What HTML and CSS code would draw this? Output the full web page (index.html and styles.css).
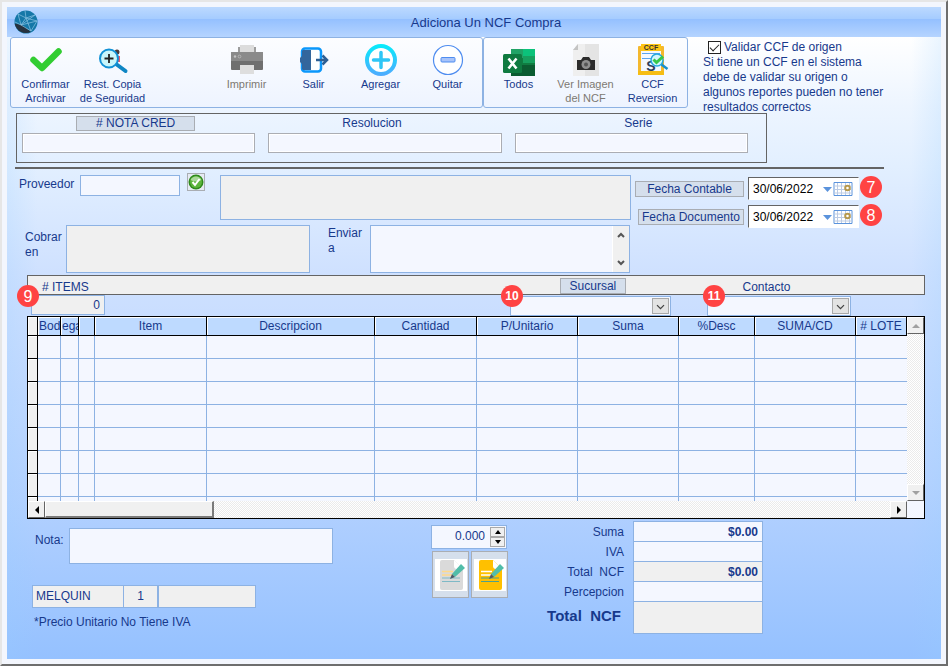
FILE: index.html
```
<!DOCTYPE html>
<html lang="es">
<head>
  <meta charset="UTF-8">
  <title>Adiciona Un NCF Compra</title>
  <link rel="stylesheet" href="styles.css">
</head>
<body>
<div class="window">
<form class="content">

  <header class="titlebar">
    <svg class="logo" viewBox="0 0 24 24">
      <circle cx="12" cy="12" r="11.5" fill="#1578a8"/>
      <path d="M.6 13.5 8 15l9 6.8A11.500 11.500 0 0 1 .6 13.500z" fill="#26323f"/>
      <path d="M4 4l8 4 9-3M4 4l3 11 5-7 5 13M7 15l16-4M12 8l11 3-6 10M7 15l10 6M12 8L11 .5M7 15l14-10M7 15l-6-3" fill="none" stroke="#8cc4e4" stroke-width=".7"/>
    </svg>
    <h1>Adiciona Un NCF Compra</h1>
  </header>

  <div class="top">
    <div class="toolbar">
      <button type="button" class="tool">
        <svg viewBox="0 0 32 32"><path d="M3.500 16 12 24 28.500 7.500" fill="none" stroke="#32cd32" stroke-width="6.500" stroke-linecap="round" stroke-linejoin="round"/></svg>
        Confirmar Archivar
      </button>
      <button type="button" class="tool">
        <svg viewBox="0 0 32 32">
          <circle cx="20" cy="8" r="2.500" fill="#4a3a3a"/><path d="M19 12h4v6h-4z" fill="#f0566a"/>
          <path d="M19 20l9.500 7" stroke="#0f86c4" stroke-width="4" stroke-linecap="round"/>
          <circle cx="12" cy="14.500" r="9" fill="#c9f6fb" stroke="#1191d6" stroke-width="2"/>
          <path d="M12 10v9M7.500 14.500h9" stroke="#222" stroke-width="1.800"/>
        </svg>
        Rest. Copia de Seguridad
      </button>
      <span class="tool"></span>
      <button type="button" class="tool" disabled>
        <svg viewBox="0 0 32 32">
          <path d="M7 3h18v6H7z" fill="#9c9c9c"/><path d="M9 1h14v8H9z" fill="#dcdcdc"/>
          <rect y="8" width="32" height="18" rx="1" fill="#6f6f6f"/><path d="M0 9q0-1 1-1h30q1 0 1 1v8H0z" fill="#8a8a8a"/>
          <circle cx="4" cy="12.500" r="1.200" fill="#c4c4c4"/><circle cx="8.500" cy="12.500" r="1.400" fill="none" stroke="#b5b5b5"/>
          <path d="M9 21h14v9H9z" fill="#dedede"/>
        </svg>
        Imprimir
      </button>
      <button type="button" class="tool">
        <svg viewBox="0 0 32 32">
          <rect x="4" y="4.500" width="19" height="23" rx="3" fill="#fff" stroke="#0a97fb" stroke-width="2.500"/>
          <path d="M5 6h8v20H5l-1-1v-5l-2-2v-4l2-2V7z" fill="#33669c"/>
          <path d="M18 16h11M24.500 11.500 29 16l-4.500 4.500" fill="none" stroke="#2d5f94" stroke-width="2.500"/>
        </svg>
        Salir
      </button>
      <button type="button" class="tool">
        <svg viewBox="0 0 32 32">
          <defs><linearGradient id="cyan" gradientUnits="userSpaceOnUse" x1="0" y1="0" x2="0" y2="32"><stop offset="0" stop-color="#06edfb"/><stop offset="1" stop-color="#4fa9ff"/></linearGradient></defs>
          <circle cx="16" cy="16" r="14" fill="#fff" stroke="url(#cyan)" stroke-width="4"/>
          <path d="M16 8.500v15M8.500 16h15" stroke="#2fc6f6" stroke-width="3.500" stroke-linecap="round"/>
        </svg>
        Agregar
      </button>
      <button type="button" class="tool">
        <svg viewBox="0 0 32 32">
          <circle cx="16" cy="16" r="14.500" fill="#fff" stroke="#4f8df0" stroke-width="1.200"/>
          <rect x="9" y="13.500" width="14" height="4.500" rx="1" fill="#a8c4fa" stroke="#4f8df0"/>
        </svg>
        Quitar
      </button>
    </div>

    <div class="toolbar">
      <button type="button" class="tool">
        <svg viewBox="0 0 32 32">
          <path d="M8 5h12v9H8z" fill="#21a366"/><path d="M20 5h12v9H20z" fill="#0cc27a"/>
          <path d="M8 14h24v8H8z" fill="#107c41"/><path d="M20 12h12v7H20z" fill="#17a05f"/><path d="M8 21h24v12H8z" fill="#0b5c31"/>
          <rect y="10" width="19" height="19" rx="1.500" fill="#0f7a40"/>
          <path d="M5.500 14.500l8 10M13.500 14.500l-8 10" stroke="#fff" stroke-width="2.600"/>
        </svg>
        Todos
      </button>
      <button type="button" class="tool" disabled>
        <svg viewBox="0 0 32 32">
          <path d="M3 6l5-6h21v32H3z" fill="#e4e4e4"/><path d="M3 6l5-6h7v32H3z" fill="#efefef"/><path d="M3 6l5-6v6z" fill="#c4c4c4"/>
          <path d="M7 16h4l2-3h6l2 3h4v10H7z" fill="#2c2c2c"/>
          <circle cx="16" cy="20.500" r="4.500" fill="#8f8f8f"/><circle cx="16" cy="20.500" r="2" fill="#555"/>
        </svg>
        Ver Imagen del NCF
      </button>
      <button type="button" class="tool">
        <svg viewBox="0 0 32 32">
          <rect x="1" y="2" width="26" height="29" rx="1" fill="#f4b82e"/><path d="M4 4h20v23H4z" fill="#f3f8ff"/>
          <path d="M4 0h20v7H4z" fill="#ffc614"/><path d="M1 27h26v4H1z" fill="#f6bd13"/>
          <text x="14" y="6" text-anchor="middle" class="icon-tag">CCF</text>
          <path d="M5 9.500h18M5 14.500h10" stroke="#5aa4ee"/>
          <text x="14" y="27" text-anchor="middle" class="icon-sum">S</text>
          <circle cx="20" cy="16" r="6" fill="#d3f6ff" stroke="#26a9e0" stroke-width="1.500"/>
          <path d="M24.500 20.500 30.500 25" stroke="#1890cc" stroke-width="2.500"/>
          <path d="M16.500 15.500l3 3 6.500-6" fill="none" stroke="#37c84a" stroke-width="3"/>
        </svg>
        CCF Reversion
      </button>
    </div>

    <div class="validate">
      <label class="check"><input type="checkbox" checked>Validar CCF de origen</label>
      <p>Si tiene un CCF en el sistema<br>debe de validar su origen o<br>algunos reportes pueden no tener<br>resultados correctos</p>
    </div>
  </div>

  <div class="refs">
    <div class="ref">
      <button type="button" class="btn btn-nota"># NOTA CRED</button>
      <input type="text" class="field" aria-label="# NOTA CRED">
    </div>
    <div class="ref">
      <label for="resolucion" class="label-res">Resolucion</label>
      <input type="text" class="field" id="resolucion">
    </div>
    <div class="ref">
      <label for="serie" class="label-serie">Serie</label>
      <input type="text" class="field" id="serie">
    </div>
  </div>

  <hr class="divider">

  <div class="data">
    <div class="provider">
      <div class="provider-row">
        <label for="proveedor" class="label-prov">Proveedor</label>
        <input type="text" id="proveedor" class="field blue prov-code">
        <button type="button" class="btn-ok" aria-label="Aceptar">
          <svg viewBox="0 0 16 16">
            <circle cx="8" cy="8" r="7.500" fill="#2f8a1c"/><circle cx="8" cy="8" r="6" fill="#5cb53c"/><path d="M2.500 6a6 6 0 0 1 11 0q-5 3-11 0z" fill="#a9d99a"/>
            <path d="M4.500 8l2.500 3 4.500-6" fill="none" stroke="#fff" stroke-width="2"/>
          </svg>
        </button>
        <textarea class="field blue grey prov-name" aria-label="Nombre del proveedor" readonly></textarea>
      </div>
      <div class="provider-row">
        <label for="cobrar" class="label-cobrar">Cobrar en</label>
        <textarea id="cobrar" class="field blue grey cobrar" readonly></textarea>
        <label for="enviar" class="label-enviar">Enviar a</label>
        <div class="enviar">
          <textarea id="enviar"></textarea>
          <div class="mini-scroll">
            <svg viewBox="0 0 8 6"><path d="M1 5l3-3 3 3" fill="none" stroke="#555" stroke-width="2"/></svg>
            <svg viewBox="0 0 8 6"><path d="M1 1l3 3 3-3" fill="none" stroke="#555" stroke-width="2"/></svg>
          </div>
        </div>
      </div>
    </div>

    <div class="dates">
      <div class="date-row">
        <button type="button" class="btn btn-contable">Fecha Contable</button>
        <div class="date">
          <input type="text" value="30/06/2022" aria-label="Fecha Contable">
          <button type="button" aria-label="Calendario">
            <svg viewBox="0 0 30 16"><path d="M0 6h9l-4.500 5z" fill="#5b93dc"/><path d="M11 1.500h18v13H11z" fill="#fff" stroke="#5b93dc"/><path d="M14.500 2v12M18.500 2v12M22.500 2v12M26.500 2v12M11 5h18M11 8.500h18M11 12h18" stroke="#bccbe4"/><circle cx="24.500" cy="7" r="2.300" fill="#fff" stroke="#b6984c" stroke-width="2"/></svg>
          </button>
          <span class="badge">7</span>
        </div>
      </div>
      <div class="date-row">
        <button type="button" class="btn btn-documento">Fecha Documento</button>
        <div class="date">
          <input type="text" value="30/06/2022" aria-label="Fecha Documento">
          <button type="button" aria-label="Calendario">
            <svg viewBox="0 0 30 16"><path d="M0 6h9l-4.500 5z" fill="#5b93dc"/><path d="M11 1.500h18v13H11z" fill="#fff" stroke="#5b93dc"/><path d="M14.500 2v12M18.500 2v12M22.500 2v12M26.500 2v12M11 5h18M11 8.500h18M11 12h18" stroke="#bccbe4"/><circle cx="24.500" cy="7" r="2.300" fill="#fff" stroke="#b6984c" stroke-width="2"/></svg>
          </button>
          <span class="badge">8</span>
        </div>
      </div>
    </div>
  </div>

  <div class="items">
    <div class="items-head">
      <label for="items" class="label-items"># ITEMS</label>
      <button type="button" class="btn btn-sucursal">Sucursal</button>
      <label for="contacto" class="label-contacto">Contacto</label>
    </div>
    <div class="items-fields">
      <div class="count">
        <input type="text" id="items" class="field blue grey" value="0" readonly>
        <span class="badge badge-items">9</span>
      </div>
      <div class="combo combo-sucursal">
        <select class="field blue" aria-label="Sucursal"><option></option></select>
        <svg viewBox="0 0 16 16"><path d="M4 7l4 4 4-4" fill="none" stroke="#444" stroke-width="1.500"/></svg>
        <span class="badge badge-sucursal">10</span>
      </div>
      <div class="combo combo-contacto">
        <select id="contacto" class="field blue"><option></option></select>
        <svg viewBox="0 0 16 16"><path d="M4 7l4 4 4-4" fill="none" stroke="#444" stroke-width="1.500"/></svg>
        <span class="badge badge-contacto">11</span>
      </div>
    </div>

    <div class="grid">
      <table>
        <colgroup>
          <col class="w-mark"><col class="w-bod"><col class="w-ega"><col class="w-gap"><col class="w-item"><col class="w-desc">
          <col class="w-cant"><col class="w-unit"><col class="w-suma"><col class="w-pdesc"><col class="w-cd"><col class="w-lote">
        </colgroup>
        <thead>
          <tr><th class="mark"></th><th class="cut">Bod</th><th class="cut">ega</th><th></th><th>Item</th><th>Descripcion</th><th>Cantidad</th><th>P/Unitario</th><th>Suma</th><th>%Desc</th><th>SUMA/CD</th><th># LOTE</th></tr>
        </thead>
        <tbody>
          <tr><td class="mark"></td><td></td><td></td><td></td><td></td><td></td><td></td><td></td><td></td><td></td><td></td><td></td></tr>
          <tr><td class="mark"></td><td></td><td></td><td></td><td></td><td></td><td></td><td></td><td></td><td></td><td></td><td></td></tr>
          <tr><td class="mark"></td><td></td><td></td><td></td><td></td><td></td><td></td><td></td><td></td><td></td><td></td><td></td></tr>
          <tr><td class="mark"></td><td></td><td></td><td></td><td></td><td></td><td></td><td></td><td></td><td></td><td></td><td></td></tr>
          <tr><td class="mark"></td><td></td><td></td><td></td><td></td><td></td><td></td><td></td><td></td><td></td><td></td><td></td></tr>
          <tr><td class="mark"></td><td></td><td></td><td></td><td></td><td></td><td></td><td></td><td></td><td></td><td></td><td></td></tr>
          <tr><td class="mark"></td><td></td><td></td><td></td><td></td><td></td><td></td><td></td><td></td><td></td><td></td><td></td></tr>
          <tr class="partial"><td class="mark"></td><td></td><td></td><td></td><td></td><td></td><td></td><td></td><td></td><td></td><td></td><td></td></tr>
        </tbody>
      </table>
      <div class="vscroll">
        <button type="button" class="arrow" aria-label="Arriba"><svg viewBox="0 0 8 8"><path d="M0 6l4-4 4 4z" fill="#a0a0a0"/></svg></button>
        <button type="button" class="arrow" aria-label="Abajo"><svg viewBox="0 0 8 8"><path d="M0 2l4 4 4-4z" fill="#a0a0a0"/></svg></button>
      </div>
      <div class="hscroll">
        <button type="button" class="arrow" aria-label="Izquierda"><svg viewBox="0 0 8 8"><path d="M6 0L2 4l4 4z"/></svg></button>
        <div class="thumb"></div>
        <button type="button" class="arrow arrow-end" aria-label="Derecha"><svg viewBox="0 0 8 8"><path d="M2 0l4 4-4 4z"/></svg></button>
      </div>
    </div>
  </div>

  <div class="footer">
    <div class="notes">
      <div class="note-row">
        <label for="nota">Nota:</label>
        <textarea id="nota" class="field blue"></textarea>
      </div>
      <div class="user-row">
        <input type="text" class="field blue grey user" value="MELQUIN" aria-label="Usuario" readonly>
        <input type="text" class="field blue grey number" value="1" aria-label="Numero" readonly>
        <input type="text" class="field blue grey extra" aria-label="Detalle" readonly>
      </div>
      <p class="hint">*Precio Unitario No Tiene IVA</p>
    </div>

    <div class="middle">
      <div class="spinner">
        <input type="text" value="0.000" aria-label="Valor">
        <div class="spin-buttons">
          <button type="button" aria-label="Subir"><svg viewBox="0 0 6 4"><path d="M0 4l3-4 3 4z"/></svg></button>
          <button type="button" aria-label="Bajar"><svg viewBox="0 0 6 4"><path d="M0 0l3 4 3-4z"/></svg></button>
        </div>
      </div>
      <div class="doc-buttons">
        <button type="button" class="btn doc" aria-label="Nota gris">
          <svg viewBox="0 0 32 32">
            <path d="M0 0h32v32H0z" fill="#fff"/><path d="M5 3q0-2 2-2h12l9 9v19q0 2-2 2H7q-2 0-2-2z" fill="#dadada"/><path d="M19 1l9 9h-6q-3 0-3-3z" fill="#fff"/>
            <path d="M7 12.500h11M7 16h10" stroke="#ffd98a" stroke-width="1.500"/><path d="M7 19h18M7 22.500h18" stroke="#7fb9c6" stroke-width="1.200"/>
            <path d="M17 15L26 5l4 4-10 9z" fill="#51bda9"/><path d="M17 15l3 3-5 2z" fill="#4e5a68"/>
          </svg>
        </button>
        <button type="button" class="btn doc" aria-label="Nota amarilla">
          <svg viewBox="0 0 32 32">
            <path d="M0 0h32v32H0z" fill="#fff"/><path d="M5 3q0-2 2-2h12l9 9v19q0 2-2 2H7q-2 0-2-2z" fill="#ffc000"/><path d="M19 1l9 9h-6q-3 0-3-3z" fill="#fff"/>
            <path d="M7 12.500h11M7 16h10" stroke="#fff" stroke-width="1.500"/><path d="M7 19h18M7 22.500h18" stroke="#4fa08c" stroke-width="1.200"/>
            <path d="M17 15L26 5l4 4-10 9z" fill="#51bda9"/><path d="M17 15l3 3-5 2z" fill="#4e5a68"/>
          </svg>
        </button>
      </div>
    </div>

    <div class="totals">
      <label for="t-suma">Suma</label><input type="text" id="t-suma" value="$0.00">
      <label for="t-iva">IVA</label><input type="text" id="t-iva">
      <label for="t-ncf">Total &nbsp;NCF</label><input type="text" id="t-ncf" class="grey" value="$0.00" readonly>
      <label for="t-perc">Percepcion</label><input type="text" id="t-perc">
      <label for="t-total" class="grand">Total &nbsp;NCF</label><input type="text" id="t-total" class="grey" readonly>
    </div>
  </div>

</form>
</div>
</body>
</html>
```
FILE: styles.css
```
* {
  box-sizing: border-box;
}
body {
  margin: 0;
  font-family: "Liberation Sans", Arial, sans-serif;
  font-size: 12px;
  line-height: 15px;
  color: #17398c;
}
button, input, select, textarea {
  font: inherit;
  color: inherit;
  margin: 0;
  padding: 0;
  border-radius: 0;
}
textarea {
  display: block;
  resize: none;
}
svg {
  display: block;
}

/* window frame */
.window {
  display: flex;
  min-height: 100vh;
  padding: 5px;
  background-color: #f3f6fd;
  border-top: 2px solid #e6e6e6;
  border-left: 2px solid #e6e6e6;
  border-right: 2px solid #6e6e6e;
  border-bottom: 2px solid #6e6e6e;
}
.content {
  flex: 1;
  min-width: 0;
  background:
    linear-gradient(to right, rgba(150, 205, 255, 0.2), transparent 30px, transparent calc(100% - 30px), rgba(150, 205, 255, 0.2)),
    linear-gradient(#ffffff 30px, #edf5ff 100px, #e2efff 160px, #cfe1ff 265px, #b3d1ff 490px, #95c1ff);
}

/* title */
.titlebar {
  display: flex;
  align-items: center;
  height: 30px;
  padding: 0 7px;
  background: linear-gradient(#bcd9ff, #a5ccff 40%, #94c0ff 40%, #b5d4ff);
}
.titlebar h1 {
  flex: 1;
  margin: 0;
  font-size: 13px;
  font-weight: normal;
  text-align: center;
}
.logo {
  width: 24px;
  height: 24px;
}

/* toolbar */
.top {
  display: flex;
  align-items: flex-start;
  padding-left: 3px;
}
.toolbar {
  display: flex;
  height: 71px;
  padding: 0 1px;
  border: 1px solid #8db2e3;
  border-radius: 3px;
  background: linear-gradient(#fcfdff, #eef4ff);
}
.tool {
  width: 67px;
  padding: 6px 0 0;
  display: flex;
  flex-direction: column;
  align-items: center;
  border: none;
  background: none;
  font-size: 11px;
  line-height: 14px;
}
.tool svg {
  width: 32px;
  height: 32px;
  margin-bottom: 1px;
  flex: none;
}
.tool:disabled {
  color: #7d7972;
}
.icon-tag {
  font-size: 7px;
  font-weight: bold;
  fill: #333;
}
.icon-sum {
  font-size: 14px;
  font-weight: bold;
  fill: #2c3f5c;
}
.validate {
  padding: 2px 0 0 15px;
  margin-bottom: -8px;
}
.validate p {
  margin: 0;
}
.check {
  display: flex;
  align-items: center;
  height: 16px;
  gap: 3px;
  padding-left: 5px;
}
.check input {
  appearance: none;
  width: 13px;
  height: 13px;
  border: 1px solid #222;
  background: #fff;
}
.check input:checked::before {
  content: "";
  display: block;
  width: 8px;
  height: 4px;
  margin: 2px 1px;
  border-left: 1px solid #222;
  border-bottom: 1px solid #222;
  transform: rotate(-45deg);
}

/* shared controls */
.field {
  border: 1px solid #abadb3;
  background: #f4f7ff;
  box-shadow: inset 0 0 0 1px #fff;
}
.blue {
  border-color: #8db2e3;
  box-shadow: none;
}
.grey {
  background: #f0f0f0;
}
.btn {
  border: 1px solid #a9adb3;
  background: #d5dfec;
  white-space: nowrap;
}
.badge {
  position: absolute;
  display: flex;
  align-items: center;
  justify-content: center;
  width: 22px;
  height: 22px;
  border-radius: 50%;
  background: #ff4343;
  color: #fff;
  font-size: 16px;
  left: 111px;
  top: -2px;
}
.badge-items {
  left: -14px;
  top: -10px;
}
.badge-sucursal, .badge-contacto {
  left: -9px;
  top: -11px;
  font-size: 12px;
  font-weight: bold;
}
.badge-contacto {
  left: -4px;
}

/* document numbers */
.refs {
  display: grid;
  grid-template-columns: repeat(3, 1fr);
  column-gap: 13px;
  height: 50px;
  margin: 5px 174px 0 9px;
  padding: 2px 18px 0 5px;
  border: 1px solid #646464;
}
.ref {
  display: flex;
  flex-direction: column;
  align-items: center;
}
.ref label {
  height: 17px;
}
.ref .field {
  width: 100%;
  height: 20px;
}
.btn-nota {
  width: 119px;
  height: 15px;
  margin: 0 6px 2px 0;
  line-height: 13px;
}
.label-res {
  padding-right: 26px;
}
.label-serie {
  padding-left: 14px;
}
.divider {
  height: 2px;
  margin: 4px 57px 0 8px;
  border: none;
  background: #646464;
}

/* provider and dates */
.data {
  display: flex;
  margin: 4px 82px 0 12px;
}
.provider {
  flex: 1;
}
.provider-row {
  display: flex;
  align-items: flex-start;
  padding-top: 2px;
}
.provider-row + .provider-row {
  padding: 5px 1px 0 0;
}
.label-prov {
  width: 61px;
  padding-top: 2px;
}
.prov-code {
  width: 100px;
  height: 21px;
}
.btn-ok {
  width: 18px;
  height: 18px;
  margin: -2px 15px 0 7px;
  border: 1px solid #a9adb3;
  background: #e6ebf3;
}
.btn-ok svg {
  width: 16px;
  height: 16px;
}
.prov-name {
  flex: 1;
  height: 45px;
}
.label-cobrar {
  width: 47px;
  padding: 5px 0 0 6px;
}
.cobrar {
  flex: 15;
  height: 48px;
}
.label-enviar {
  width: 60px;
  padding: 1px 20px 0 18px;
}
.enviar {
  display: flex;
  flex: 16;
  height: 48px;
  border: 1px solid #8db2e3;
  background: #f4f7ff;
}
.enviar textarea {
  flex: 1;
  min-width: 0;
  border: none;
  background: none;
}
.mini-scroll {
  display: flex;
  flex-direction: column;
  justify-content: space-between;
  align-items: center;
  width: 17px;
  padding: 6px 0;
  border-left: 1px solid #fff;
  background: #f0f0f0;
}
.mini-scroll svg {
  width: 8px;
  height: 6px;
}
.dates {
  display: flex;
  flex-direction: column;
  gap: 5px;
  padding: 4px 0 0 4px;
}
.date-row {
  display: flex;
  justify-content: flex-end;
  align-items: center;
  gap: 4px;
}
.date-row .btn {
  height: 16px;
  line-height: 14px;
}
.btn-contable {
  width: 109px;
}
.btn-documento {
  width: 106px;
}
.date {
  position: relative;
  display: flex;
  align-items: center;
  width: 111px;
  height: 23px;
  border: 1px solid #fff;
  border-top-color: #646464;
  border-left-color: #646464;
  background: #fff;
  color: #000;
}
.date input {
  width: 74px;
  padding: 2px 0 0 4px;
  border: none;
  background: none;
}
.date button {
  width: 30px;
  border: none;
  background: none;
}
.date svg {
  width: 30px;
  height: 16px;
}

/* items */
.items {
  margin: 2px 16px 0 20px;
}
.items-head, .items-fields {
  display: grid;
  grid-template-columns: 483fr 197fr 218fr;
}
.items-head {
  height: 20px;
  border: 1px solid #646464;
  background: #f0f0f0;
}
.label-items {
  padding: 4px 0 0 14px;
}
.btn-sucursal {
  width: 66px;
  height: 16px;
  margin: 2px 0 0 50px;
}
.label-contacto {
  padding: 4px 0 0 36px;
}
.items-fields {
  height: 21px;
}
.count {
  position: relative;
  width: 74px;
  height: 20px;
  margin-left: 4px;
}
.count input {
  width: 100%;
  height: 100%;
  padding-right: 4px;
  text-align: right;
}
.combo {
  position: relative;
  height: 20px;
  margin-top: 1px;
}
.combo-sucursal {
  width: 161px;
}
.combo-contacto {
  width: 144px;
}
.combo select {
  appearance: none;
  width: 100%;
  height: 100%;
}
.combo svg {
  position: absolute;
  right: 2px;
  top: 2px;
  width: 17px;
  height: 16px;
  border: 1px solid #a9a9a9;
  background: #e3e3e3;
  pointer-events: none;
}

/* grid */
.grid {
  display: grid;
  grid-template-columns: 1fr 17px;
  border: 1px solid #000;
  background: #f4f7ff;
}
table {
  table-layout: fixed;
  width: 100%;
  border-collapse: separate;
  border-spacing: 0;
}
.w-mark { width: 10px; }
.w-bod { width: 23px; }
.w-ega { width: 18px; }
.w-gap { width: 16px; }
.w-item { width: 112px; }
.w-desc { width: 168px; }
.w-cant { width: 102px; }
.w-unit { width: 101px; }
.w-suma { width: 101px; }
.w-pdesc { width: 76px; }
.w-cd { width: 101px; }
.w-lote { width: 51px; }
th {
  height: 19px;
  padding: 0;
  overflow: hidden;
  white-space: nowrap;
  font-weight: normal;
  background: #bedaff;
  border-right: 1px solid #000;
  border-bottom: 1px solid #000;
  box-shadow: inset 1px 1px 0 #fff;
}
th.cut {
  text-align: left;
  padding-left: 1px;
}
td {
  height: 23px;
  padding: 0;
  border-right: 1px solid #8db2e3;
  border-bottom: 1px solid #8db2e3;
}
td:last-child {
  border-right: none;
}
.mark {
  background: #f0f0f0;
  border-color: #000;
  box-shadow: inset 1px 1px 0 #fff;
}
.partial td {
  height: 4px;
  border-bottom: none;
}
.vscroll, .hscroll {
  display: flex;
  justify-content: space-between;
  background: repeating-conic-gradient(#fff 0 25%, #ebebeb 0 50%) 0 0 / 2px 2px;
}
.vscroll {
  flex-direction: column;
}
.hscroll {
  height: 17px;
}
.arrow {
  display: flex;
  align-items: center;
  justify-content: center;
  width: 17px;
  height: 17px;
  background: #f0f0f0;
  border: 1px solid #fff;
  border-right-color: #646464;
  border-bottom-color: #646464;
}
.arrow svg {
  width: 8px;
  height: 8px;
}
.thumb {
  width: 169px;
  background: #f0f0f0;
  border: 1px solid #fff;
  border-right: 2px solid #7a7a7a;
  border-bottom: 2px solid #7a7a7a;
}
.arrow-end {
  margin-left: auto;
}

/* footer */
.footer {
  display: grid;
  grid-template-columns: 424fr 109fr 401fr;
  padding-top: 2px;
}
.notes {
  padding: 7px 0 0 25px;
}
.note-row {
  display: flex;
}
.note-row label {
  width: 37px;
  padding: 5px 0 0 3px;
}
.note-row textarea {
  flex: 1;
  height: 36px;
  margin-right: 98px;
}
.user-row {
  display: flex;
  margin-top: 21px;
}
.user-row input {
  height: 23px;
  padding: 0 0 2px 3px;
}
.user {
  width: 92px;
}
.user-row .number {
  width: 35px;
  padding-left: 0;
  margin-left: -1px;
  text-align: center;
}
.extra {
  width: 98px;
}
.hint {
  margin: 7px 0 0 2px;
}
.middle {
  padding-top: 4px;
}
.spinner {
  display: flex;
  width: 76px;
  height: 24px;
  padding: 1px;
  border: 1px solid #8db2e3;
  background: #f4f7ff;
}
.spinner input {
  flex: 1;
  min-width: 0;
  padding: 0 5px 2px 0;
  border: none;
  background: none;
  text-align: right;
}
.spin-buttons {
  display: flex;
  flex-direction: column;
  width: 15px;
}
.spin-buttons button {
  display: flex;
  align-items: center;
  justify-content: center;
  flex: 1;
  border: 1px solid #a9a9a9;
  background: #f0f0f0;
}
.spin-buttons svg {
  width: 6px;
  height: 4px;
}
.doc-buttons {
  display: flex;
  gap: 2px;
  padding: 2px 0 0 1px;
}
.doc {
  width: 37px;
  height: 47px;
}
.doc svg {
  width: 32px;
  height: 32px;
  margin: 0 auto;
}
.totals {
  display: grid;
  grid-template-columns: 84px 130px;
  grid-template-rows: repeat(4, 20px) 32px;
  column-gap: 9px;
}
.totals label {
  padding-top: 4px;
  text-align: right;
}
.totals input {
  width: 100%;
  height: calc(100% + 1px);
  padding-right: 4px;
  border: 1px solid #8db2e3;
  background: #f4f7ff;
  font-weight: bold;
  text-align: right;
}
.totals .grey {
  background: #f0f0f0;
}
.totals .grand {
  padding: 7px 3px 0 0;
  font-size: 15px;
  font-weight: bold;
  white-space: nowrap;
}
```
